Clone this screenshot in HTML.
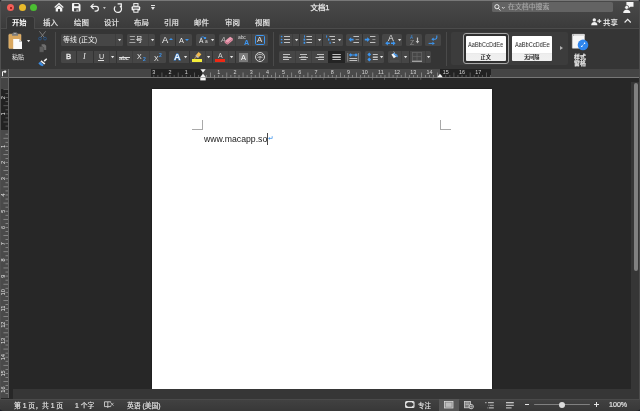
<!DOCTYPE html>
<html lang="zh-CN">
<head>
<meta charset="utf-8">
<title>文档1</title>
<style>
*{box-sizing:border-box;margin:0;padding:0}
html,body{width:640px;height:411px;overflow:hidden;background:#1d1f2a}
body{font-family:"Liberation Sans","Noto Sans CJK SC",sans-serif;color:#e6e6e6;position:relative;-webkit-font-smoothing:antialiased}
.abs{position:absolute}
#win{position:absolute;left:0;top:0;width:640px;height:411px;background:#272727;border-radius:2.5px 2.5px 4px 4px;overflow:hidden}
#title{position:absolute;left:0;top:0;width:640px;height:28px;background:linear-gradient(#494949 0,#444 40%,#3b3b3b 100%);border-top:1px solid #787878}
.tl{position:absolute;top:2.7px;width:7.2px;height:7.2px;border-radius:50%}
.t{position:absolute;white-space:nowrap;line-height:1;will-change:transform}
.tab{position:absolute;will-change:transform;top:18px;font-size:7.4px;line-height:9px;color:#e6e6e6;white-space:nowrap;-webkit-text-stroke:0.2px #e6e6e6}
#ribbon{position:absolute;left:0;top:28px;width:640px;height:41px;background:#353535}
.g{position:absolute;background:#464646;border-radius:1.5px}
.r1{top:34.5px}
.r2{top:51.5px}
.dv{position:absolute;top:0;width:1px;height:11px;background:#333}
.vsep{position:absolute;width:1px;background:#4a4a4a}
.arr{position:absolute;width:0;height:0;border-left:1.7px solid transparent;border-right:1.7px solid transparent;border-top:2.1px solid #ececec}
svg{position:absolute;overflow:visible}
#rulerband{position:absolute;left:0;top:69px;width:640px;height:9px;background:#454545;border-bottom:1px solid #777}
#status{position:absolute;left:0;top:398.6px;width:640px;height:12.4px;background:linear-gradient(#414141,#383838);border-top:1px solid #4a4a4a;font-size:6.5px;color:#e4e4e4}
</style>
</head>
<body>
<div id="win">

<!-- title bar + tabs -->
<div id="title">
  <div class="tl" style="left:7.3px;background:#f25f58"></div>
  <div class="tl" style="left:18.8px;background:#e8ba2b"></div>
  <div class="tl" style="left:30.1px;background:#4bbf32"></div>
  <div class="abs" style="left:9.9px;top:5.7px;width:2px;height:2px;border-radius:50%;background:#8c0f0a"></div>
</div>
<div class="t" style="left:290px;width:60px;top:4.2px;text-align:center;font-size:7.4px;color:#ececec;-webkit-text-stroke:0.25px #ececec">文档1</div>

<div id="ribbon"></div>
<!-- quick access icons -->
<svg style="left:53.6px;top:2.2px" width="10" height="10" viewBox="0 0 10 10"><path d="M5 0.7 L0.3 5 L1.1 5.9 L5 2.4 L8.9 5.9 L9.7 5 Z" fill="#f4f4f4"/><path d="M1.7 6.2 L5 3.3 L8.3 6.2 V9.5 H6 V6.9 H4 V9.5 H1.7 Z" fill="#f4f4f4"/></svg>
<svg style="left:72.3px;top:3.3px" width="9" height="9" viewBox="0 0 9 9"><path d="M0.8 0.1 H6.8 L8.5 1.8 V7.6 Q8.5 8.4 7.7 8.4 H0.8 Q0 8.4 0 7.6 V0.9 Q0 0.1 0.8 0.1 Z" fill="#f4f4f4"/><rect x="2.2" y="0.9" width="4.4" height="2.3" fill="#444"/><rect x="2" y="5.2" width="4.6" height="3.2" fill="#444"/><rect x="4.6" y="6.4" width="1" height="2" fill="#f4f4f4"/></svg>
<svg style="left:90px;top:3px" width="10" height="9" viewBox="0 0 10 9"><path d="M3.6 0.8 L1 3.4 L3.6 6" fill="none" stroke="#f2f2f2" stroke-width="1.2"/><path d="M1.2 3.4 H6 A2.4 2.4 0 0 1 6 8.2 H4.6" fill="none" stroke="#f2f2f2" stroke-width="1.2"/></svg>
<svg style="left:102.9px;top:6.5px" width="2.8" height="2.3" viewBox="0 0 2.8 2.3"><path d="M0 0 H2.8 L1.4 2.3 Z" fill="#c4c4c4"/></svg>
<svg style="left:112.6px;top:2.8px" width="10" height="10" viewBox="0 0 10 10"><path d="M2.3 3.4 A3.6 3.6 0 1 0 6.9 2.9" fill="none" stroke="#f2f2f2" stroke-width="1.25"/><path d="M4.6 0.9 H8.3 V4.6" fill="none" stroke="#f2f2f2" stroke-width="1.25"/></svg>
<svg style="left:130.8px;top:2.6px" width="10" height="10" viewBox="0 0 10 10"><rect x="2.8" y="0.6" width="4.2" height="2.6" fill="none" stroke="#f2f2f2" stroke-width="1"/><rect x="0.6" y="3.2" width="8.6" height="4.4" rx="1" fill="#f2f2f2"/><rect x="2" y="4.4" width="5.8" height="1.4" fill="#444"/><rect x="2.8" y="6.2" width="4.2" height="3" fill="#444" stroke="#f2f2f2" stroke-width="1"/></svg>
<div class="abs" style="left:151.4px;top:5.1px;width:3.9px;height:1px;background:#e4e4e4"></div>
<svg style="left:151.4px;top:7px" width="3.9" height="3" viewBox="0 0 3.9 3"><path d="M0 0 H3.9 L1.95 3 Z" fill="#e4e4e4"/></svg>

<!-- search -->
<div class="abs" style="left:491.8px;top:2.4px;width:121.6px;height:9.8px;background:#636363;border-radius:1.6px"></div>
<svg style="left:494.2px;top:3.6px" width="11" height="7" viewBox="0 0 11 7"><circle cx="2.9" cy="2.7" r="2.1" fill="none" stroke="#ececec" stroke-width="1"/><path d="M4.4 4.3 L6.3 6.5" stroke="#ececec" stroke-width="1"/><path d="M8 3.1 L9.3 4.4 L10.6 3.1" fill="none" stroke="#ececec" stroke-width="0.9"/></svg>
<div class="t" style="left:507.6px;top:4.1px;font-size:6.9px;color:#a6a6a6;-webkit-text-stroke:0.15px #a6a6a6">在文档中搜索</div>
<!-- user icon -->
<svg style="left:622.6px;top:2px" width="11" height="11" viewBox="0 0 11 11"><path d="M3.4 0.1 H10.5 V4.8 H7.4 L5.6 6.3 L5.9 4.8 H3.4 Z" fill="#f4f4f4"/><circle cx="3.7" cy="5.4" r="2" fill="#f4f4f4" stroke="#444" stroke-width="0.7"/><path d="M0.2 10.9 C0.2 8.6 1.6 7.7 3.7 7.7 C5.8 7.7 7.4 8.6 7.4 10.9 Z" fill="#f4f4f4"/></svg>

<!-- tabs -->
<div class="abs" style="left:0;top:28px;width:640px;height:1px;background:#4b4b4b"></div><div class="abs" style="left:5.6px;top:15.8px;width:29.2px;height:13.2px;background:#353535;border:1px solid #4b4b4b;border-bottom:0;border-radius:3px 3px 0 0"></div>
<div class="tab" style="left:12.3px;font-weight:bold;color:#fff;font-size:7.25px;-webkit-text-stroke:0">开始</div>
<div class="tab" style="left:43px">插入</div>
<div class="tab" style="left:73.5px">绘图</div>
<div class="tab" style="left:103.8px">设计</div>
<div class="tab" style="left:134px">布局</div>
<div class="tab" style="left:164px">引用</div>
<div class="tab" style="left:194.3px">邮件</div>
<div class="tab" style="left:224.6px">审阅</div>
<div class="tab" style="left:254.8px">视图</div>
<!-- share -->
<svg style="left:590.5px;top:17.5px" width="11" height="8" viewBox="0 0 11 8"><circle cx="3.3" cy="1.9" r="1.7" fill="#f0f0f0"/><path d="M0.2 7.2 C0.2 4.8 1.6 4 3.3 4 C5 4 6.4 4.8 6.4 7.2 Z" fill="#f0f0f0"/><path d="M8.3 1.1 V5.1 M6.3 3.1 H10.3" stroke="#f0f0f0" stroke-width="1.1"/></svg>
<div class="tab" style="left:603px;font-weight:bold;color:#e2e2e2;font-size:7.4px;-webkit-text-stroke:0">共享</div>
<svg style="left:624.3px;top:18.4px" width="7.4" height="5.4" viewBox="0 0 7.4 5.4"><path d="M0.6 4.5 L3.7 1.3 L6.8 4.5" fill="none" stroke="#ececec" stroke-width="1.2"/></svg>

<!-- ribbon -->
<svg style="left:8px;top:32px" width="15" height="18" viewBox="0 0 15 18"><rect x="0.8" y="2.2" width="12.2" height="14.4" rx="0.8" fill="#d9a75e" stroke="#f0c98a" stroke-width="0.5"/><path d="M5 0.4 H9 V1.6 H10 V3.8 H4 V1.6 H5 Z" fill="#7c7c7c"/><rect x="6" y="0.9" width="2" height="1" fill="#b0b0b0"/><path d="M5.2 7 H11 L14 10 V17 H5.2 Z" fill="#fbfbfb"/><path d="M11 7 V10 H14 Z" fill="#c4c4c4"/></svg>
<svg style="left:26.9px;top:40.1px" width="3.2" height="2.4" viewBox="0 0 3.2 2.4"><path d="M0 0.1 H3.2 L1.6 2.3 Z" fill="#e4e4e4"/></svg>
<div class="t" style="left:12.2px;top:54.6px;font-size:5.9px;color:#ececec;">粘贴</div>
<svg style="left:38px;top:31px" width="9" height="9.5" viewBox="0 0 9 9.5"><path d="M1.4 0.3 L6.4 6.6 M7.6 0.3 L2.6 6.6" stroke="#8c8c8c" stroke-width="0.8" fill="none"/><circle cx="2" cy="7.6" r="1.4" fill="none" stroke="#2a5a94" stroke-width="0.8"/><circle cx="7" cy="7.6" r="1.4" fill="none" stroke="#2a5a94" stroke-width="0.8"/></svg>
<svg style="left:38.8px;top:43.8px" width="7.5" height="8.5" viewBox="0 0 7.5 8.5"><path d="M2.6 0.2 H5.6 L7.2 1.8 V6 H2.6 Z" fill="#6f6f6f"/><path d="M0.3 2.4 H3.4 L4.9 3.9 V8.3 H0.3 Z" fill="#5e5e5e" stroke="#353535" stroke-width="0.4"/></svg>
<svg style="left:38px;top:57.6px" width="9.5" height="8.5" viewBox="0 0 9.5 8.5"><path d="M5.6 2.6 L8.4 0.3 L9.2 1.2 L6.8 3.8 Z" fill="#f2f2f2"/><path d="M3.4 2.2 L7.4 5.4 L6.2 6.6 L2.4 3.4 Z" fill="#f2f2f2"/><path d="M2.2 3.8 L5.8 7 L4.4 8.3 C3 7.8 1.4 6.6 0.3 5.2 Z" fill="#3c8be0"/></svg>
<div class="vsep" style="left:55px;top:31.5px;height:34.5px"></div>
<div class="g" style="left:61.0px;top:34.4px;width:62.0px;height:11.2px"></div>
<div class="abs" style="left:115.1px;top:34.4px;width:1px;height:11.2px;background:#3e3e3e"></div>
<svg style="left:118.2px;top:38.8px" width="3.2" height="2.4" viewBox="0 0 3.2 2.4"><path d="M0 0.1 H3.2 L1.6 2.3 Z" fill="#e4e4e4"/></svg>
<div class="t" style="left:63.2px;top:36.6px;font-size:6.9px;color:#f2f2f2;">等线 (正文)</div>
<div class="g" style="left:127.3px;top:34.4px;width:28.2px;height:11.2px"></div>
<div class="abs" style="left:148.4px;top:34.4px;width:1px;height:11.2px;background:#3e3e3e"></div>
<svg style="left:150.7px;top:38.8px" width="3.2" height="2.4" viewBox="0 0 3.2 2.4"><path d="M0 0.1 H3.2 L1.6 2.3 Z" fill="#e4e4e4"/></svg>
<div class="t" style="left:129.1px;top:36.8px;font-size:6.8px;color:#f2f2f2;">三号</div>
<div class="g" style="left:159.7px;top:34.4px;width:32.3px;height:11.2px"></div>
<div class="abs" style="left:175.2px;top:34.4px;width:1px;height:11.2px;background:#333"></div>
<div class="t" style="left:162.0px;top:35.2px;font-size:9.4px;color:#ececec;">A</div>
<div class="abs" style="left:169.1px;top:38.2px;width:0;height:0;border-left:2.1px solid transparent;border-right:2.1px solid transparent;border-bottom:2.3px solid #3d96f0"></div>
<div class="t" style="left:179.0px;top:36.6px;font-size:7.3px;color:#ececec;">A</div>
<div class="abs" style="left:184.9px;top:38.9px;width:0;height:0;border-left:2.1px solid transparent;border-right:2.1px solid transparent;border-top:2.3px solid #3d96f0"></div>
<div class="g" style="left:195.8px;top:34.4px;width:19.6px;height:11.2px"></div>
<svg style="left:210.6px;top:39.0px" width="3.2" height="2.4" viewBox="0 0 3.2 2.4"><path d="M0 0.1 H3.2 L1.6 2.3 Z" fill="#e4e4e4"/></svg>
<div class="t" style="left:198.5px;top:38.3px;font-size:6.6px;color:#ececec;">A</div>
<div class="t" style="left:204.8px;top:40.1px;font-size:4.8px;color:#d8d8d8;">a</div>
<svg style="left:200.4px;top:35.8px" width="7" height="4" viewBox="0 0 7 4"><path d="M0.4 2.2 C1.4 0.6 3.2 0.4 4.6 1.6" fill="none" stroke="#3d96f0" stroke-width="0.8"/><rect x="3.9" y="0.9" width="2.2" height="2.2" rx="0.5" fill="#3d96f0"/></svg>
<div class="g" style="left:219.1px;top:34.4px;width:48.7px;height:11.2px"></div>
<div class="abs" style="left:235.0px;top:34.4px;width:1px;height:11.2px;background:#3e3e3e"></div>
<div class="abs" style="left:251.0px;top:34.4px;width:1px;height:11.2px;background:#3e3e3e"></div>
<div class="t" style="left:221.4px;top:35.6px;font-size:7.2px;color:#b4b4b4;font-style:italic">A</div>
<svg style="left:224px;top:36px" width="10" height="9.4" viewBox="0 0 10 9.4"><path d="M0.9 5.1 L6.1 0.7 L8.9 2.6 L3.7 7.1 Z" fill="#ee9db2"/><path d="M0.9 5.1 L3.7 7.1 L3.5 8.8 L0.6 6.8 Z" fill="#d97f97"/><path d="M8.9 2.6 L8.9 4.3 L3.5 8.8 L3.7 7.1 Z" fill="#e48aa1"/></svg>
<div class="t" style="left:238.0px;top:34.9px;font-size:5.0px;color:#d8d8d8;letter-spacing:-0.1px">abc</div>
<div class="t" style="left:243.7px;top:38.5px;font-size:7.2px;color:#3d96f0;font-weight:bold">A</div>
<div class="abs" style="left:254.9px;top:35.2px;width:10px;height:9.4px;border:1px solid #3d96f0;border-radius:1.6px"></div>
<div class="t" style="left:257.3px;top:36.4px;font-size:7.8px;color:#e0e0e0;">A</div>
<div class="g" style="left:61.0px;top:51.3px;width:104.7px;height:11.3px"></div>
<div class="abs" style="left:76.1px;top:51.3px;width:1px;height:11.3px;background:#333"></div>
<div class="abs" style="left:93.0px;top:51.3px;width:1px;height:11.3px;background:#333"></div>
<div class="abs" style="left:108.5px;top:51.3px;width:1px;height:11.3px;background:#3e3e3e"></div>
<div class="abs" style="left:115.9px;top:51.3px;width:1px;height:11.3px;background:#333"></div>
<div class="abs" style="left:132.3px;top:51.3px;width:1px;height:11.3px;background:#3e3e3e"></div>
<div class="abs" style="left:148.9px;top:51.3px;width:1px;height:11.3px;background:#3e3e3e"></div>
<svg style="left:111.1px;top:56.0px" width="3.2" height="2.4" viewBox="0 0 3.2 2.4"><path d="M0 0.1 H3.2 L1.6 2.3 Z" fill="#e4e4e4"/></svg>
<div class="t" style="left:65.9px;top:52.9px;font-size:7.8px;color:#e8e8e8;-webkit-text-stroke:0.35px #e8e8e8">B</div>
<div class="t" style="left:83.2px;top:53.3px;font-size:8.2px;color:#e8e8e8;font-style:italic;font-family:Liberation Serif,serif">I</div>
<div class="t" style="left:98.5px;top:52.9px;font-size:7.2px;color:#e8e8e8;">U</div>
<div class="abs" style="left:98.4px;top:59.7px;width:5.6px;height:0.8px;background:#e0e0e0"></div>
<div class="t" style="left:119.2px;top:54.8px;font-size:6.0px;color:#dcdcdc;font-weight:bold;letter-spacing:-0.2px">abc</div>
<div class="abs" style="left:118.6px;top:57.3px;width:11.6px;height:0.6px;background:#e0e0e0"></div>
<div class="t" style="left:137.2px;top:53.0px;font-size:7.0px;color:#e8e8e8;">X</div>
<div class="t" style="left:142.5px;top:56.6px;font-size:5.0px;color:#3d96f0;font-weight:bold">2</div>
<div class="t" style="left:154.0px;top:55.0px;font-size:7.0px;color:#e8e8e8;">X</div>
<div class="t" style="left:159.2px;top:53.0px;font-size:5.0px;color:#3d96f0;font-weight:bold">2</div>
<div class="g" style="left:169.2px;top:51.3px;width:99.0px;height:11.3px"></div>
<div class="abs" style="left:188.9px;top:51.3px;width:1px;height:11.3px;background:#333"></div>
<div class="abs" style="left:205.0px;top:51.3px;width:1px;height:11.3px;background:#3e3e3e"></div>
<div class="abs" style="left:211.8px;top:51.3px;width:1px;height:11.3px;background:#333"></div>
<div class="abs" style="left:227.8px;top:51.3px;width:1px;height:11.3px;background:#3e3e3e"></div>
<div class="abs" style="left:235.0px;top:51.3px;width:1px;height:11.3px;background:#333"></div>
<div class="abs" style="left:250.9px;top:51.3px;width:1px;height:11.3px;background:#3e3e3e"></div>
<svg style="left:184.0px;top:56.0px" width="3.2" height="2.4" viewBox="0 0 3.2 2.4"><path d="M0 0.1 H3.2 L1.6 2.3 Z" fill="#e4e4e4"/></svg>
<svg style="left:207.3px;top:56.0px" width="3.2" height="2.4" viewBox="0 0 3.2 2.4"><path d="M0 0.1 H3.2 L1.6 2.3 Z" fill="#e4e4e4"/></svg>
<svg style="left:229.9px;top:56.0px" width="3.2" height="2.4" viewBox="0 0 3.2 2.4"><path d="M0 0.1 H3.2 L1.6 2.3 Z" fill="#e4e4e4"/></svg>
<div class="t" style="left:173.6px;top:52.8px;font-size:9.0px;color:#f2f2f2;font-weight:bold;-webkit-text-stroke:0.9px #3d8fe8;paint-order:stroke fill">A</div>
<svg style="left:193px;top:52px" width="9" height="7.5" viewBox="0 0 9 7.5"><path d="M5.6 0 L8.4 2.2 L5.8 5.2 L3 3 Z" fill="#f2bc50"/><path d="M3 3 L5.8 5.2 L5 6 L2.4 3.9 Z" fill="#d4d4d4"/><path d="M2.6 4.2 L4 5.3 L1.4 7.2 L0.9 6.8 Z" fill="#a8844c"/></svg>
<div class="abs" style="left:192px;top:59.3px;width:10.3px;height:2.6px;background:#f5ee3a"></div>
<div class="t" style="left:217.7px;top:52.4px;font-size:7.0px;color:#d4d4d4;">A</div>
<div class="abs" style="left:214.9px;top:59.3px;width:10.3px;height:2.6px;background:#f02814"></div>
<div class="abs" style="left:239px;top:52.5px;width:9px;height:9px;background:#7b7b7b"></div>
<div class="t" style="left:240.9px;top:53.6px;font-size:7.4px;color:#fafafa;">A</div>
<div class="abs" style="left:254.9px;top:51.8px;width:10.3px;height:10.3px;border:0.7px solid #d4d4d4;border-radius:50%"></div>
<div class="t" style="left:257.0px;top:53.9px;font-size:6.0px;color:#d4d4d4;">字</div>
<div class="vsep" style="left:273px;top:31.5px;height:34.5px"></div>
<div class="g" style="left:278.8px;top:34.4px;width:64.2px;height:11.2px"></div>
<div class="abs" style="left:292.2px;top:34.4px;width:1px;height:11.2px;background:#3e3e3e"></div>
<div class="abs" style="left:298.8px;top:34.4px;width:1px;height:11.2px;background:#333"></div>
<div class="abs" style="left:314.8px;top:34.4px;width:1px;height:11.2px;background:#3e3e3e"></div>
<div class="abs" style="left:322.0px;top:34.4px;width:1px;height:11.2px;background:#333"></div>
<svg style="left:294.6px;top:38.9px" width="3.2" height="2.4" viewBox="0 0 3.2 2.4"><path d="M0 0.1 H3.2 L1.6 2.3 Z" fill="#e4e4e4"/></svg>
<svg style="left:317.6px;top:38.9px" width="3.2" height="2.4" viewBox="0 0 3.2 2.4"><path d="M0 0.1 H3.2 L1.6 2.3 Z" fill="#e4e4e4"/></svg>
<svg style="left:338.2px;top:38.9px" width="3.2" height="2.4" viewBox="0 0 3.2 2.4"><path d="M0 0.1 H3.2 L1.6 2.3 Z" fill="#e4e4e4"/></svg>
<div class="g" style="left:346.1px;top:34.4px;width:32.9px;height:11.2px"></div>
<div class="abs" style="left:361.9px;top:34.4px;width:1px;height:11.2px;background:#333"></div>
<div class="g" style="left:382.3px;top:34.4px;width:19.8px;height:11.2px"></div>
<svg style="left:397.6px;top:38.8px" width="3.2" height="2.4" viewBox="0 0 3.2 2.4"><path d="M0 0.1 H3.2 L1.6 2.3 Z" fill="#e4e4e4"/></svg>
<div class="t" style="left:387.5px;top:33.9px;font-size:8.6px;color:#e4e4e4;">A</div>
<div class="g" style="left:405.7px;top:34.4px;width:16.0px;height:11.2px"></div>
<div class="t" style="left:409.9px;top:34.6px;font-size:5.8px;color:#3d96f0;transform:scaleX(0.8);transform-origin:0 0">A</div>
<div class="t" style="left:409.9px;top:39.6px;font-size:6.8px;color:#8e8e8e;">Z</div>
<div class="g" style="left:425.4px;top:34.4px;width:15.8px;height:11.2px"></div>
<svg style="left:428.4px;top:35px" width="10" height="10" viewBox="0 0 10 10"><path d="M8.8 0.4 V2.6 Q8.8 4.2 7.2 4.2 H5" fill="none" stroke="#3d96f0" stroke-width="1.1"/><path d="M3.4 4.2 L5.6 2.4 V6 Z" fill="#3d96f0"/><path d="M0.6 8.4 H4.6" stroke="#3d96f0" stroke-width="1"/><path d="M6.8 8.4 L4.4 6.7 V10 Z" fill="#3d96f0"/></svg>
<div class="g" style="left:278.8px;top:51.3px;width:82.1px;height:11.3px"></div>
<div class="abs" style="left:294.8px;top:51.3px;width:1px;height:11.3px;background:#3e3e3e"></div>
<div class="abs" style="left:311.1px;top:51.3px;width:1px;height:11.3px;background:#3e3e3e"></div>
<div class="abs" style="left:328.1px;top:51.3px;width:16.6px;height:11.3px;background:#242424"></div>
<div class="g" style="left:364.8px;top:51.3px;width:19.4px;height:11.3px"></div>
<svg style="left:379.7px;top:56.0px" width="3.2" height="2.4" viewBox="0 0 3.2 2.4"><path d="M0 0.1 H3.2 L1.6 2.3 Z" fill="#e4e4e4"/></svg>
<div class="g" style="left:388.0px;top:51.3px;width:43.0px;height:11.3px"></div>
<div class="abs" style="left:401.1px;top:51.3px;width:1px;height:11.3px;background:#3e3e3e"></div>
<div class="abs" style="left:408.5px;top:51.3px;width:1px;height:11.3px;background:#333"></div>
<div class="abs" style="left:424.5px;top:51.3px;width:1px;height:11.3px;background:#3e3e3e"></div>
<svg style="left:403.7px;top:56.0px" width="3.2" height="2.4" viewBox="0 0 3.2 2.4"><path d="M0 0.1 H3.2 L1.6 2.3 Z" fill="#e4e4e4"/></svg>
<svg style="left:426.6px;top:56.0px" width="3.2" height="2.4" viewBox="0 0 3.2 2.4"><path d="M0 0.1 H3.2 L1.6 2.3 Z" fill="#e4e4e4"/></svg>
<svg style="left:390px;top:51px" width="10" height="11" viewBox="0 0 10 11"><path d="M3.6 0.4 L4.8 2.2" stroke="#b8b8b8" stroke-width="0.7"/><path d="M1.4 3.6 L4.2 1.7 L6.9 5.2 L3.8 7.2 Z" fill="#f4f4f4"/><path d="M3 2.5 L4.2 1.7 L6.9 5.2 L6 5.8 Z" fill="#3d96f0"/><path d="M5.4 2.6 C7.2 3 8 4.4 7.7 6.4 L6.6 5.6 C6.8 4.6 6.4 3.8 5.4 2.6 Z" fill="#3d96f0"/><rect x="0" y="9.6" width="9.2" height="0.8" fill="#565656"/></svg>
<svg style="left:412.2px;top:52.2px" width="10" height="10" viewBox="0 0 10 10"><rect x="0.4" y="0.4" width="9.2" height="8.4" fill="none" stroke="#636363" stroke-width="0.8"/><path d="M5 0.4 V8.8 M0.4 4.6 H9.6" stroke="#636363" stroke-width="0.8"/><rect x="0" y="8.8" width="10" height="1" fill="#b4b4b4"/></svg>
<svg style="left:0;top:0" width="640" height="70" viewBox="0 0 640 70"><rect x="284.0" y="36.0" width="6.0" height="1.0" fill="#c2c2c2"/><circle cx="281.6" cy="36.5" r="0.85" fill="#3d96f0"/><rect x="284.0" y="39.0" width="6.0" height="1.0" fill="#c2c2c2"/><circle cx="281.6" cy="39.5" r="0.85" fill="#3d96f0"/><rect x="284.0" y="42.0" width="6.0" height="1.0" fill="#c2c2c2"/><circle cx="281.6" cy="42.5" r="0.85" fill="#3d96f0"/><rect x="306.4" y="36.0" width="5.6" height="1.0" fill="#c2c2c2"/><rect x="306.4" y="39.0" width="5.6" height="1.0" fill="#c2c2c2"/><rect x="306.4" y="42.0" width="5.6" height="1.0" fill="#c2c2c2"/><rect x="304.0" y="35.4" width="0.9" height="2.2" fill="#3d96f0"/><rect x="303.6" y="38.6" width="1.6" height="2.0" fill="#3d96f0"/><rect x="303.6" y="41.8" width="1.6" height="2.0" fill="#3d96f0"/><rect x="329.4" y="36.0" width="5.6" height="1.0" fill="#c2c2c2"/><rect x="331.4" y="39.0" width="3.6" height="1.0" fill="#c2c2c2"/><rect x="332.6" y="42.0" width="2.4" height="1.0" fill="#c2c2c2"/><rect x="326.2" y="35.4" width="0.9" height="2.2" fill="#3d96f0"/><rect x="328.0" y="38.6" width="1.4" height="2.0" fill="#3d96f0"/><rect x="329.6" y="41.8" width="1.0" height="2.0" fill="#3d96f0"/><rect x="353.4" y="36.0" width="5.6" height="1.0" fill="#c2c2c2"/><rect x="355.6" y="39.0" width="3.4" height="1.0" fill="#8c8c8c"/><rect x="353.4" y="42.0" width="5.6" height="1.0" fill="#c2c2c2"/><path d="M348.6 39.6 L351.2 37.2 V38.8 H353.6 V40.4 H351.2 V42 Z" fill="#3d96f0" /><rect x="370.0" y="36.0" width="5.4" height="1.0" fill="#c2c2c2"/><rect x="372.4" y="39.0" width="3.0" height="1.0" fill="#8c8c8c"/><rect x="370.0" y="42.0" width="5.4" height="1.0" fill="#c2c2c2"/><path d="M369.8 39.6 L367.2 37.2 V38.8 H364.8 V40.4 H367.2 V42 Z" fill="#3d96f0" /><path d="M385.2 43.3 L387.8 41 V42.5 H389.8 V44.1 H387.8 V45.6 Z M395.6 43.3 L393 41 V42.5 H391 V44.1 H393 V45.6 Z" fill="#3d96f0" /><path d="M416.9 37.4 H418.1 V41 H419.3 L417.5 43.4 L415.7 41 H416.9 Z" fill="#c4c4c4" /><rect x="283.0" y="54.0" width="7.0" height="1.0" fill="#c2c2c2"/><rect x="283.0" y="56.0" width="5.0" height="1.0" fill="#8c8c8c"/><rect x="283.0" y="57.0" width="8.4" height="1.0" fill="#c2c2c2"/><rect x="283.0" y="59.0" width="6.0" height="1.0" fill="#c2c2c2"/><rect x="300.0" y="54.0" width="7.0" height="1.0" fill="#c2c2c2"/><rect x="301.0" y="56.0" width="5.0" height="1.0" fill="#8c8c8c"/><rect x="299.0" y="57.0" width="9.0" height="1.0" fill="#c2c2c2"/><rect x="300.6" y="59.0" width="5.8" height="1.0" fill="#c2c2c2"/><rect x="317.0" y="54.0" width="7.0" height="1.0" fill="#c2c2c2"/><rect x="319.0" y="56.0" width="5.0" height="1.0" fill="#8c8c8c"/><rect x="315.6" y="57.0" width="8.4" height="1.0" fill="#c2c2c2"/><rect x="318.0" y="59.0" width="6.0" height="1.0" fill="#c2c2c2"/><rect x="332.4" y="54.0" width="8.4" height="1.0" fill="#c2c2c2"/><rect x="332.4" y="56.0" width="8.4" height="1.0" fill="#8c8c8c"/><rect x="332.4" y="57.0" width="8.4" height="1.0" fill="#c2c2c2"/><rect x="332.4" y="59.0" width="8.4" height="1.0" fill="#c2c2c2"/><rect x="347.3" y="53.0" width="0.9" height="8.6" fill="#8c8c8c"/><rect x="357.9" y="53.0" width="0.9" height="8.6" fill="#8c8c8c"/><path d="M348.8 55 L350.6 53.2 L352 54.6 H354.6 L356 53.2 L357.8 55 L356 56.8 L354.6 55.4 H352 L350.6 56.8 Z" fill="#3d96f0" /><rect x="349.4" y="58.0" width="7.8" height="1.0" fill="#c2c2c2"/><rect x="349.4" y="60.0" width="7.8" height="1.0" fill="#c2c2c2"/><rect x="372.8" y="54.0" width="5.0" height="1.0" fill="#c2c2c2"/><rect x="372.8" y="56.0" width="5.0" height="1.0" fill="#8c8c8c"/><rect x="372.8" y="57.0" width="5.0" height="1.0" fill="#c2c2c2"/><rect x="372.8" y="59.0" width="5.0" height="1.0" fill="#c2c2c2"/><path d="M369.3 52.6 L371.2 54.6 L369.3 56.6 L367.4 54.6 Z M369.3 57.4 L371.2 59.4 L369.3 61.4 L367.4 59.4 Z" fill="#3d96f0" /></svg>
<div class="vsep" style="left:446px;top:31.5px;height:34.5px"></div>
<div class="abs" style="left:451px;top:31.8px;width:116.5px;height:33.2px;background:#3c3c3c;border-radius:2px"></div>
<div class="abs" style="left:463.2px;top:33px;width:45.4px;height:30.6px;border:1.9px solid #a6a6a6;border-radius:3px;background:#303030"></div>
<div class="abs" style="left:466.2px;top:35.5px;width:39.4px;height:25.6px;background:linear-gradient(#fff 0,#fff 67%,#e6e6e6 68%,#eee 72%,#f0f0f0 100%);border-radius:1px"></div>
<div class="t" style="left:468.0px;top:40.7px;font-size:7.2px;color:#262626;transform:scaleX(0.795);transform-origin:0 0">AaBbCcDdEe</div>
<div class="t" style="left:466.2px;top:54.8px;font-size:5.2px;color:#1e1e1e;width:39.4px;text-align:center;font-weight:bold">正文</div>
<div class="abs" style="left:512.3px;top:35.9px;width:39.4px;height:25.4px;background:linear-gradient(#fff 0,#fff 67%,#e6e6e6 68%,#eee 72%,#f0f0f0 100%);border-radius:1px"></div>
<div class="t" style="left:514.6px;top:40.7px;font-size:7.2px;color:#262626;transform:scaleX(0.785);transform-origin:0 0">AaBbCcDdEe</div>
<div class="t" style="left:512.3px;top:54.8px;font-size:5.2px;color:#1e1e1e;width:39.4px;text-align:center;font-weight:bold">无间隔</div>
<div class="abs" style="left:560.1px;top:45.8px;width:0;height:0;border-top:2.7px solid transparent;border-bottom:2.7px solid transparent;border-left:3.8px solid #b0b0b0"></div>
<svg style="left:572.4px;top:34px" width="17" height="17" viewBox="0 0 17 17"><rect x="0.3" y="0.3" width="12.2" height="14" rx="0.5" fill="#f6f6f6" stroke="#d2d2d2" stroke-width="0.5"/><rect x="0.3" y="0.3" width="12.2" height="1.6" fill="#dadada"/><rect x="0.8" y="0.6" width="1.2" height="1" fill="#9a9a9a"/><circle cx="11" cy="10.9" r="5.3" fill="#2f86ee"/><path d="M9.4 12.6 L10.6 11.4 M11.6 10.2 L12.8 9" stroke="#fff" stroke-width="0.9"/><circle cx="12.6" cy="9.2" r="0.7" fill="#fff"/><circle cx="9.8" cy="12.4" r="0.7" fill="#fff"/></svg>
<div class="t" style="left:568.8px;top:54.3px;font-size:5.9px;color:#eeeeee;width:22px;text-align:center;line-height:6.1px;-webkit-text-stroke:0.25px #eee">样式<br>窗格</div>

<!-- ruler band -->
<div id="rulerband"></div>
<div class="abs" style="left:8px;top:69px;width:1px;height:9px;background:#6a6a6a"></div>
<svg style="left:2px;top:69.8px" width="5" height="7" viewBox="0 0 5 7"><path d="M0.5 6.2 V1.7 H3" fill="none" stroke="#f0f0f0" stroke-width="1"/><path d="M3 0.1 L4.5 1.7 L3 3.3 L1.9 1.7 Z" fill="#f0f0f0"/></svg>
<div class="abs" style="left:202.5px;top:69px;width:237.7px;height:8px;background:#4a4a4a"></div>
<div class="abs" style="left:202.5px;top:77px;width:237.7px;height:1px;background:#787878"></div>
<div class="abs" style="left:151.2px;top:69px;width:51.3px;height:8px;background:#222"></div>
<div class="abs" style="left:440.2px;top:69px;width:51.1px;height:8px;background:#222"></div>
<svg style="left:0;top:69px;will-change:transform" width="640" height="12" viewBox="0 0 640 12"><rect x="153.49" y="6" width="0.7" height="2.4" fill="#6e6e6e"/><rect x="157.55" y="6" width="0.7" height="2.4" fill="#6e6e6e"/><rect x="161.60" y="3.5" width="0.7" height="4.9" fill="#6e6e6e"/><rect x="165.66" y="6" width="0.7" height="2.4" fill="#6e6e6e"/><rect x="169.71" y="6" width="0.7" height="2.4" fill="#6e6e6e"/><rect x="173.77" y="6" width="0.7" height="2.4" fill="#6e6e6e"/><rect x="177.82" y="3.5" width="0.7" height="4.9" fill="#6e6e6e"/><rect x="181.88" y="6" width="0.7" height="2.4" fill="#6e6e6e"/><rect x="185.93" y="6" width="0.7" height="2.4" fill="#6e6e6e"/><rect x="189.99" y="6" width="0.7" height="2.4" fill="#6e6e6e"/><rect x="194.04" y="3.5" width="0.7" height="4.9" fill="#6e6e6e"/><rect x="198.09" y="6" width="0.7" height="2.4" fill="#6e6e6e"/><rect x="206.21" y="6" width="0.7" height="2.4" fill="#9c9c9c"/><rect x="210.26" y="3.5" width="0.7" height="4.9" fill="#9c9c9c"/><rect x="214.31" y="6" width="0.7" height="2.4" fill="#9c9c9c"/><rect x="218.37" y="6" width="0.7" height="2.4" fill="#9c9c9c"/><rect x="222.43" y="6" width="0.7" height="2.4" fill="#9c9c9c"/><rect x="226.48" y="3.5" width="0.7" height="4.9" fill="#9c9c9c"/><rect x="230.53" y="6" width="0.7" height="2.4" fill="#9c9c9c"/><rect x="234.59" y="6" width="0.7" height="2.4" fill="#9c9c9c"/><rect x="238.65" y="6" width="0.7" height="2.4" fill="#9c9c9c"/><rect x="242.70" y="3.5" width="0.7" height="4.9" fill="#9c9c9c"/><rect x="246.75" y="6" width="0.7" height="2.4" fill="#9c9c9c"/><rect x="250.81" y="6" width="0.7" height="2.4" fill="#9c9c9c"/><rect x="254.87" y="6" width="0.7" height="2.4" fill="#9c9c9c"/><rect x="258.92" y="3.5" width="0.7" height="4.9" fill="#9c9c9c"/><rect x="262.97" y="6" width="0.7" height="2.4" fill="#9c9c9c"/><rect x="267.03" y="6" width="0.7" height="2.4" fill="#9c9c9c"/><rect x="271.08" y="6" width="0.7" height="2.4" fill="#9c9c9c"/><rect x="275.14" y="3.5" width="0.7" height="4.9" fill="#9c9c9c"/><rect x="279.19" y="6" width="0.7" height="2.4" fill="#9c9c9c"/><rect x="283.25" y="6" width="0.7" height="2.4" fill="#9c9c9c"/><rect x="287.30" y="6" width="0.7" height="2.4" fill="#9c9c9c"/><rect x="291.36" y="3.5" width="0.7" height="4.9" fill="#9c9c9c"/><rect x="295.41" y="6" width="0.7" height="2.4" fill="#9c9c9c"/><rect x="299.47" y="6" width="0.7" height="2.4" fill="#9c9c9c"/><rect x="303.52" y="6" width="0.7" height="2.4" fill="#9c9c9c"/><rect x="307.58" y="3.5" width="0.7" height="4.9" fill="#9c9c9c"/><rect x="311.63" y="6" width="0.7" height="2.4" fill="#9c9c9c"/><rect x="315.69" y="6" width="0.7" height="2.4" fill="#9c9c9c"/><rect x="319.75" y="6" width="0.7" height="2.4" fill="#9c9c9c"/><rect x="323.80" y="3.5" width="0.7" height="4.9" fill="#9c9c9c"/><rect x="327.85" y="6" width="0.7" height="2.4" fill="#9c9c9c"/><rect x="331.91" y="6" width="0.7" height="2.4" fill="#9c9c9c"/><rect x="335.96" y="6" width="0.7" height="2.4" fill="#9c9c9c"/><rect x="340.02" y="3.5" width="0.7" height="4.9" fill="#9c9c9c"/><rect x="344.07" y="6" width="0.7" height="2.4" fill="#9c9c9c"/><rect x="348.13" y="6" width="0.7" height="2.4" fill="#9c9c9c"/><rect x="352.18" y="6" width="0.7" height="2.4" fill="#9c9c9c"/><rect x="356.24" y="3.5" width="0.7" height="4.9" fill="#9c9c9c"/><rect x="360.29" y="6" width="0.7" height="2.4" fill="#9c9c9c"/><rect x="364.35" y="6" width="0.7" height="2.4" fill="#9c9c9c"/><rect x="368.40" y="6" width="0.7" height="2.4" fill="#9c9c9c"/><rect x="372.46" y="3.5" width="0.7" height="4.9" fill="#9c9c9c"/><rect x="376.51" y="6" width="0.7" height="2.4" fill="#9c9c9c"/><rect x="380.57" y="6" width="0.7" height="2.4" fill="#9c9c9c"/><rect x="384.62" y="6" width="0.7" height="2.4" fill="#9c9c9c"/><rect x="388.68" y="3.5" width="0.7" height="4.9" fill="#9c9c9c"/><rect x="392.73" y="6" width="0.7" height="2.4" fill="#9c9c9c"/><rect x="396.79" y="6" width="0.7" height="2.4" fill="#9c9c9c"/><rect x="400.84" y="6" width="0.7" height="2.4" fill="#9c9c9c"/><rect x="404.90" y="3.5" width="0.7" height="4.9" fill="#9c9c9c"/><rect x="408.95" y="6" width="0.7" height="2.4" fill="#9c9c9c"/><rect x="413.01" y="6" width="0.7" height="2.4" fill="#9c9c9c"/><rect x="417.06" y="6" width="0.7" height="2.4" fill="#9c9c9c"/><rect x="421.12" y="3.5" width="0.7" height="4.9" fill="#9c9c9c"/><rect x="425.17" y="6" width="0.7" height="2.4" fill="#9c9c9c"/><rect x="429.23" y="6" width="0.7" height="2.4" fill="#9c9c9c"/><rect x="433.28" y="6" width="0.7" height="2.4" fill="#9c9c9c"/><rect x="437.34" y="3.5" width="0.7" height="4.9" fill="#9c9c9c"/><rect x="441.39" y="6" width="0.7" height="2.4" fill="#6e6e6e"/><rect x="445.45" y="6" width="0.7" height="2.4" fill="#6e6e6e"/><rect x="449.50" y="6" width="0.7" height="2.4" fill="#6e6e6e"/><rect x="453.56" y="3.5" width="0.7" height="4.9" fill="#6e6e6e"/><rect x="457.61" y="6" width="0.7" height="2.4" fill="#6e6e6e"/><rect x="461.67" y="6" width="0.7" height="2.4" fill="#6e6e6e"/><rect x="465.72" y="6" width="0.7" height="2.4" fill="#6e6e6e"/><rect x="469.78" y="3.5" width="0.7" height="4.9" fill="#6e6e6e"/><rect x="473.83" y="6" width="0.7" height="2.4" fill="#6e6e6e"/><rect x="477.89" y="6" width="0.7" height="2.4" fill="#6e6e6e"/><rect x="481.94" y="6" width="0.7" height="2.4" fill="#6e6e6e"/><rect x="486.00" y="3.5" width="0.7" height="4.9" fill="#6e6e6e"/><rect x="490.05" y="6" width="0.7" height="2.4" fill="#6e6e6e"/><rect x="214.28" y="9" width="0.7" height="1.8" fill="#6a6a6a"/><rect x="226.41" y="9" width="0.7" height="1.8" fill="#6a6a6a"/><rect x="238.54" y="9" width="0.7" height="1.8" fill="#6a6a6a"/><rect x="250.67" y="9" width="0.7" height="1.8" fill="#6a6a6a"/><rect x="262.80" y="9" width="0.7" height="1.8" fill="#6a6a6a"/><rect x="274.93" y="9" width="0.7" height="1.8" fill="#6a6a6a"/><rect x="287.06" y="9" width="0.7" height="1.8" fill="#6a6a6a"/><rect x="299.19" y="9" width="0.7" height="1.8" fill="#6a6a6a"/><rect x="311.32" y="9" width="0.7" height="1.8" fill="#6a6a6a"/><rect x="323.45" y="9" width="0.7" height="1.8" fill="#6a6a6a"/><rect x="335.58" y="9" width="0.7" height="1.8" fill="#6a6a6a"/><rect x="347.71" y="9" width="0.7" height="1.8" fill="#6a6a6a"/><rect x="359.84" y="9" width="0.7" height="1.8" fill="#6a6a6a"/><rect x="371.97" y="9" width="0.7" height="1.8" fill="#6a6a6a"/><rect x="384.10" y="9" width="0.7" height="1.8" fill="#6a6a6a"/><rect x="396.23" y="9" width="0.7" height="1.8" fill="#6a6a6a"/><rect x="408.36" y="9" width="0.7" height="1.8" fill="#6a6a6a"/><rect x="420.49" y="9" width="0.7" height="1.8" fill="#6a6a6a"/><rect x="432.62" y="9" width="0.7" height="1.8" fill="#6a6a6a"/><text x="153.84" y="5.2" font-size="5.4" fill="#d6d6d6" text-anchor="middle" font-family="Liberation Sans, sans-serif">3</text><text x="170.06" y="5.2" font-size="5.4" fill="#d6d6d6" text-anchor="middle" font-family="Liberation Sans, sans-serif">2</text><text x="186.28" y="5.2" font-size="5.4" fill="#d6d6d6" text-anchor="middle" font-family="Liberation Sans, sans-serif">1</text><text x="218.72" y="5.2" font-size="5.4" fill="#d6d6d6" text-anchor="middle" font-family="Liberation Sans, sans-serif">1</text><text x="234.94" y="5.2" font-size="5.4" fill="#d6d6d6" text-anchor="middle" font-family="Liberation Sans, sans-serif">2</text><text x="251.16" y="5.2" font-size="5.4" fill="#d6d6d6" text-anchor="middle" font-family="Liberation Sans, sans-serif">3</text><text x="267.38" y="5.2" font-size="5.4" fill="#d6d6d6" text-anchor="middle" font-family="Liberation Sans, sans-serif">4</text><text x="283.60" y="5.2" font-size="5.4" fill="#d6d6d6" text-anchor="middle" font-family="Liberation Sans, sans-serif">5</text><text x="299.82" y="5.2" font-size="5.4" fill="#d6d6d6" text-anchor="middle" font-family="Liberation Sans, sans-serif">6</text><text x="316.04" y="5.2" font-size="5.4" fill="#d6d6d6" text-anchor="middle" font-family="Liberation Sans, sans-serif">7</text><text x="332.26" y="5.2" font-size="5.4" fill="#d6d6d6" text-anchor="middle" font-family="Liberation Sans, sans-serif">8</text><text x="348.48" y="5.2" font-size="5.4" fill="#d6d6d6" text-anchor="middle" font-family="Liberation Sans, sans-serif">9</text><text x="364.70" y="5.2" font-size="5.4" fill="#d6d6d6" text-anchor="middle" font-family="Liberation Sans, sans-serif">10</text><text x="380.92" y="5.2" font-size="5.4" fill="#d6d6d6" text-anchor="middle" font-family="Liberation Sans, sans-serif">11</text><text x="397.14" y="5.2" font-size="5.4" fill="#d6d6d6" text-anchor="middle" font-family="Liberation Sans, sans-serif">12</text><text x="413.36" y="5.2" font-size="5.4" fill="#d6d6d6" text-anchor="middle" font-family="Liberation Sans, sans-serif">13</text><text x="429.58" y="5.2" font-size="5.4" fill="#d6d6d6" text-anchor="middle" font-family="Liberation Sans, sans-serif">14</text><text x="445.80" y="5.2" font-size="5.4" fill="#d6d6d6" text-anchor="middle" font-family="Liberation Sans, sans-serif">15</text><text x="462.02" y="5.2" font-size="5.4" fill="#d6d6d6" text-anchor="middle" font-family="Liberation Sans, sans-serif">16</text><text x="478.24" y="5.2" font-size="5.4" fill="#d6d6d6" text-anchor="middle" font-family="Liberation Sans, sans-serif">17</text></svg>
<svg style="left:199.5px;top:69px" width="6" height="12" viewBox="0 0 6 12"><path d="M0.3 0.3 H5.7 L3 3.6 Z" fill="#f4f4f4"/><path d="M3 4.8 L5.7 8 H0.3 Z" fill="#f4f4f4"/><rect x="0.3" y="8.6" width="5.4" height="2.8" fill="#f4f4f4"/></svg>
<svg style="left:437.2px;top:73px" width="6" height="5" viewBox="0 0 6 5"><path d="M3 0.8 L5.7 4.2 H0.3 Z" fill="#f4f4f4"/></svg>

<!-- document -->
<div class="abs" style="left:1px;top:78px;width:8px;height:320px;background:#454545;border-right:1px solid #646464"></div>
<div class="abs" style="left:1px;top:89px;width:7px;height:41.1px;background:#222"></div>
<div class="abs" style="left:1px;top:130.1px;width:7px;height:267.9px;background:#4a4a4a"></div>
<svg style="left:0;top:78px;will-change:transform" width="9" height="320" viewBox="0 78 9 320"><rect y="89.20" x="3.4" height="0.7" width="4.6" fill="#6e6e6e"/><rect y="93.25" x="5.5" height="0.7" width="2.5" fill="#6e6e6e"/><rect y="97.31" x="5.5" height="0.7" width="2.5" fill="#6e6e6e"/><rect y="101.37" x="5.5" height="0.7" width="2.5" fill="#6e6e6e"/><rect y="105.42" x="3.4" height="0.7" width="4.6" fill="#6e6e6e"/><rect y="109.47" x="5.5" height="0.7" width="2.5" fill="#6e6e6e"/><rect y="113.53" x="5.5" height="0.7" width="2.5" fill="#6e6e6e"/><rect y="117.59" x="5.5" height="0.7" width="2.5" fill="#6e6e6e"/><rect y="121.64" x="3.4" height="0.7" width="4.6" fill="#6e6e6e"/><rect y="125.69" x="5.5" height="0.7" width="2.5" fill="#6e6e6e"/><rect y="133.81" x="5.5" height="0.7" width="2.5" fill="#9c9c9c"/><rect y="137.86" x="3.4" height="0.7" width="4.6" fill="#9c9c9c"/><rect y="141.91" x="5.5" height="0.7" width="2.5" fill="#9c9c9c"/><rect y="145.97" x="5.5" height="0.7" width="2.5" fill="#9c9c9c"/><rect y="150.03" x="5.5" height="0.7" width="2.5" fill="#9c9c9c"/><rect y="154.08" x="3.4" height="0.7" width="4.6" fill="#9c9c9c"/><rect y="158.13" x="5.5" height="0.7" width="2.5" fill="#9c9c9c"/><rect y="162.19" x="5.5" height="0.7" width="2.5" fill="#9c9c9c"/><rect y="166.25" x="5.5" height="0.7" width="2.5" fill="#9c9c9c"/><rect y="170.30" x="3.4" height="0.7" width="4.6" fill="#9c9c9c"/><rect y="174.35" x="5.5" height="0.7" width="2.5" fill="#9c9c9c"/><rect y="178.41" x="5.5" height="0.7" width="2.5" fill="#9c9c9c"/><rect y="182.47" x="5.5" height="0.7" width="2.5" fill="#9c9c9c"/><rect y="186.52" x="3.4" height="0.7" width="4.6" fill="#9c9c9c"/><rect y="190.57" x="5.5" height="0.7" width="2.5" fill="#9c9c9c"/><rect y="194.63" x="5.5" height="0.7" width="2.5" fill="#9c9c9c"/><rect y="198.69" x="5.5" height="0.7" width="2.5" fill="#9c9c9c"/><rect y="202.74" x="3.4" height="0.7" width="4.6" fill="#9c9c9c"/><rect y="206.79" x="5.5" height="0.7" width="2.5" fill="#9c9c9c"/><rect y="210.85" x="5.5" height="0.7" width="2.5" fill="#9c9c9c"/><rect y="214.91" x="5.5" height="0.7" width="2.5" fill="#9c9c9c"/><rect y="218.96" x="3.4" height="0.7" width="4.6" fill="#9c9c9c"/><rect y="223.01" x="5.5" height="0.7" width="2.5" fill="#9c9c9c"/><rect y="227.07" x="5.5" height="0.7" width="2.5" fill="#9c9c9c"/><rect y="231.12" x="5.5" height="0.7" width="2.5" fill="#9c9c9c"/><rect y="235.18" x="3.4" height="0.7" width="4.6" fill="#9c9c9c"/><rect y="239.23" x="5.5" height="0.7" width="2.5" fill="#9c9c9c"/><rect y="243.29" x="5.5" height="0.7" width="2.5" fill="#9c9c9c"/><rect y="247.34" x="5.5" height="0.7" width="2.5" fill="#9c9c9c"/><rect y="251.40" x="3.4" height="0.7" width="4.6" fill="#9c9c9c"/><rect y="255.45" x="5.5" height="0.7" width="2.5" fill="#9c9c9c"/><rect y="259.51" x="5.5" height="0.7" width="2.5" fill="#9c9c9c"/><rect y="263.56" x="5.5" height="0.7" width="2.5" fill="#9c9c9c"/><rect y="267.62" x="3.4" height="0.7" width="4.6" fill="#9c9c9c"/><rect y="271.67" x="5.5" height="0.7" width="2.5" fill="#9c9c9c"/><rect y="275.73" x="5.5" height="0.7" width="2.5" fill="#9c9c9c"/><rect y="279.78" x="5.5" height="0.7" width="2.5" fill="#9c9c9c"/><rect y="283.84" x="3.4" height="0.7" width="4.6" fill="#9c9c9c"/><rect y="287.89" x="5.5" height="0.7" width="2.5" fill="#9c9c9c"/><rect y="291.95" x="5.5" height="0.7" width="2.5" fill="#9c9c9c"/><rect y="296.00" x="5.5" height="0.7" width="2.5" fill="#9c9c9c"/><rect y="300.06" x="3.4" height="0.7" width="4.6" fill="#9c9c9c"/><rect y="304.11" x="5.5" height="0.7" width="2.5" fill="#9c9c9c"/><rect y="308.17" x="5.5" height="0.7" width="2.5" fill="#9c9c9c"/><rect y="312.22" x="5.5" height="0.7" width="2.5" fill="#9c9c9c"/><rect y="316.28" x="3.4" height="0.7" width="4.6" fill="#9c9c9c"/><rect y="320.33" x="5.5" height="0.7" width="2.5" fill="#9c9c9c"/><rect y="324.39" x="5.5" height="0.7" width="2.5" fill="#9c9c9c"/><rect y="328.44" x="5.5" height="0.7" width="2.5" fill="#9c9c9c"/><rect y="332.50" x="3.4" height="0.7" width="4.6" fill="#9c9c9c"/><rect y="336.55" x="5.5" height="0.7" width="2.5" fill="#9c9c9c"/><rect y="340.61" x="5.5" height="0.7" width="2.5" fill="#9c9c9c"/><rect y="344.66" x="5.5" height="0.7" width="2.5" fill="#9c9c9c"/><rect y="348.72" x="3.4" height="0.7" width="4.6" fill="#9c9c9c"/><rect y="352.77" x="5.5" height="0.7" width="2.5" fill="#9c9c9c"/><rect y="356.83" x="5.5" height="0.7" width="2.5" fill="#9c9c9c"/><rect y="360.88" x="5.5" height="0.7" width="2.5" fill="#9c9c9c"/><rect y="364.94" x="3.4" height="0.7" width="4.6" fill="#9c9c9c"/><rect y="368.99" x="5.5" height="0.7" width="2.5" fill="#9c9c9c"/><rect y="373.05" x="5.5" height="0.7" width="2.5" fill="#9c9c9c"/><rect y="377.10" x="5.5" height="0.7" width="2.5" fill="#9c9c9c"/><rect y="381.16" x="3.4" height="0.7" width="4.6" fill="#9c9c9c"/><rect y="385.21" x="5.5" height="0.7" width="2.5" fill="#9c9c9c"/><rect y="389.27" x="5.5" height="0.7" width="2.5" fill="#9c9c9c"/><rect y="393.32" x="5.5" height="0.7" width="2.5" fill="#9c9c9c"/><text transform="translate(5.2 97.66) rotate(-90)" font-size="5.6" fill="#e8e8e8" text-anchor="middle" font-family="Liberation Sans, sans-serif">2</text><text transform="translate(5.2 113.88) rotate(-90)" font-size="5.6" fill="#e8e8e8" text-anchor="middle" font-family="Liberation Sans, sans-serif">1</text><text transform="translate(5.2 146.32) rotate(-90)" font-size="5.6" fill="#e8e8e8" text-anchor="middle" font-family="Liberation Sans, sans-serif">1</text><text transform="translate(5.2 162.54) rotate(-90)" font-size="5.6" fill="#e8e8e8" text-anchor="middle" font-family="Liberation Sans, sans-serif">2</text><text transform="translate(5.2 178.76) rotate(-90)" font-size="5.6" fill="#e8e8e8" text-anchor="middle" font-family="Liberation Sans, sans-serif">3</text><text transform="translate(5.2 194.98) rotate(-90)" font-size="5.6" fill="#e8e8e8" text-anchor="middle" font-family="Liberation Sans, sans-serif">4</text><text transform="translate(5.2 211.20) rotate(-90)" font-size="5.6" fill="#e8e8e8" text-anchor="middle" font-family="Liberation Sans, sans-serif">5</text><text transform="translate(5.2 227.42) rotate(-90)" font-size="5.6" fill="#e8e8e8" text-anchor="middle" font-family="Liberation Sans, sans-serif">6</text><text transform="translate(5.2 243.64) rotate(-90)" font-size="5.6" fill="#e8e8e8" text-anchor="middle" font-family="Liberation Sans, sans-serif">7</text><text transform="translate(5.2 259.86) rotate(-90)" font-size="5.6" fill="#e8e8e8" text-anchor="middle" font-family="Liberation Sans, sans-serif">8</text><text transform="translate(5.2 276.08) rotate(-90)" font-size="5.6" fill="#e8e8e8" text-anchor="middle" font-family="Liberation Sans, sans-serif">9</text><text transform="translate(5.2 292.30) rotate(-90)" font-size="5.6" fill="#e8e8e8" text-anchor="middle" font-family="Liberation Sans, sans-serif">10</text><text transform="translate(5.2 308.52) rotate(-90)" font-size="5.6" fill="#e8e8e8" text-anchor="middle" font-family="Liberation Sans, sans-serif">11</text><text transform="translate(5.2 324.74) rotate(-90)" font-size="5.6" fill="#e8e8e8" text-anchor="middle" font-family="Liberation Sans, sans-serif">12</text><text transform="translate(5.2 340.96) rotate(-90)" font-size="5.6" fill="#e8e8e8" text-anchor="middle" font-family="Liberation Sans, sans-serif">13</text><text transform="translate(5.2 357.18) rotate(-90)" font-size="5.6" fill="#e8e8e8" text-anchor="middle" font-family="Liberation Sans, sans-serif">14</text><text transform="translate(5.2 373.40) rotate(-90)" font-size="5.6" fill="#e8e8e8" text-anchor="middle" font-family="Liberation Sans, sans-serif">15</text><text transform="translate(5.2 389.62) rotate(-90)" font-size="5.6" fill="#e8e8e8" text-anchor="middle" font-family="Liberation Sans, sans-serif">16</text></svg>
<div class="abs" style="left:152px;top:89px;width:340px;height:300px;background:#fff;box-shadow:0 0 1.5px #111"></div>
<div class="abs" style="left:192.2px;top:120.3px;width:10.5px;height:9.4px;border-right:1px solid #a9a9a9;border-bottom:1px solid #a9a9a9"></div>
<div class="abs" style="left:440.1px;top:120.3px;width:10.5px;height:9.4px;border-left:1px solid #a9a9a9;border-bottom:1px solid #a9a9a9"></div>
<div class="t" style="left:203.5px;top:135.2px;font-size:8.7px;color:#222">www.macapp.so</div>
<div class="abs" style="left:266.9px;top:133px;width:0.9px;height:11.8px;background:#4a4a4a"></div>
<svg style="left:267.6px;top:135.8px" width="5" height="4" viewBox="0 0 5 4"><path d="M4.2 0.2 V2.4 H1.2" fill="none" stroke="#4a9aee" stroke-width="0.8"/><path d="M0.1 2.4 L1.9 1 V3.8 Z" fill="#4a9aee"/></svg>
<div class="abs" style="left:631px;top:82px;width:8px;height:307px;background:#363636"></div>
<div class="abs" style="left:633.6px;top:83.4px;width:4.4px;height:188px;background:#808080;border-radius:2.2px"></div>
<div class="abs" style="left:12.5px;top:389px;width:626.5px;height:10px;background:#363636"></div>
<div class="abs" style="left:639px;top:2px;width:1px;height:409px;background:#4c4c4c"></div>
<div class="abs" style="left:0;top:2px;width:1px;height:409px;background:#505050"></div>

<!-- status bar -->
<div id="status"></div>

<div class="t" style="left:13.8px;top:402.5px;font-size:6.8px;color:#e8e8e8;-webkit-text-stroke:0.15px #e8e8e8">第 1 页，共 1 页</div>
<div class="t" style="left:75px;top:402.5px;font-size:6.8px;color:#e8e8e8;-webkit-text-stroke:0.15px #e8e8e8">1 个字</div>
<svg style="left:104px;top:400.8px" width="10" height="8" viewBox="0 0 10 8"><path d="M0.5 0.8 H3.8 V5.6 H0.5 Z" fill="none" stroke="#e2e2e2" stroke-width="0.8"/><path d="M3.8 0.8 H6.7 V1.6 M6.7 4.8 V5.6 H3.8 M3.8 5.6 V7" fill="none" stroke="#e2e2e2" stroke-width="0.8"/><path d="M6.9 1.9 L9.5 4.7 M9.5 1.9 L6.9 4.7" stroke="#e2e2e2" stroke-width="0.7"/></svg>
<div class="t" style="left:126.5px;top:402.5px;font-size:6.8px;color:#e8e8e8;-webkit-text-stroke:0.15px #e8e8e8">英语 (美国)</div>
<svg style="left:405px;top:400.7px" width="9.6" height="7" viewBox="0 0 9.6 7"><rect x="0.6" y="0.6" width="8.4" height="5.8" rx="1" fill="none" stroke="#e4e4e4" stroke-width="1.1"/><path d="M1 1 H3 L1 3 Z M8.6 1 H6.6 L8.6 3 Z M1 6 H3 L1 4 Z M8.6 6 H6.6 L8.6 4 Z" fill="#e4e4e4"/></svg>
<div class="t" style="left:418.4px;top:402.5px;font-size:6.4px;color:#e8e8e8;-webkit-text-stroke:0.15px #e8e8e8">专注</div>
<div class="abs" style="left:438.5px;top:399px;width:20px;height:12px;background:#565656"></div>
<svg style="left:444px;top:401px" width="9.4" height="7.4" viewBox="0 0 9.4 7.4"><rect x="0.4" y="0.4" width="8.6" height="6.6" fill="#8a8a8a" stroke="#d8d8d8" stroke-width="0.8"/><rect x="1.8" y="1.6" width="5.8" height="4.2" fill="#bdbdbd"/></svg>
<svg style="left:464px;top:400.8px" width="10" height="8" viewBox="0 0 10 8"><rect x="0.4" y="0.4" width="6" height="6.4" fill="#7a7a7a" stroke="#d0d0d0" stroke-width="0.8"/><path d="M1.6 2 H5.2 M1.6 3.6 H5.2" stroke="#d0d0d0" stroke-width="0.6"/><circle cx="7.2" cy="5.6" r="2.2" fill="#3a3a3a" stroke="#e0e0e0" stroke-width="0.8"/><path d="M5 5.6 H9.4 M7.2 3.4 V7.8" stroke="#e0e0e0" stroke-width="0.5"/></svg>
<svg style="left:485px;top:401.6px" width="9" height="7" viewBox="0 0 9 7"><g fill="#cfcfcf"><rect x="0.2" y="0.2" width="1.3" height="1"/><rect x="3" y="0.2" width="5.8" height="1"/></g><g fill="#a8a8a8"><rect x="3.4" y="2.8" width="1" height="1"/><rect x="5" y="2.8" width="3.8" height="1"/><rect x="2.4" y="5.4" width="1" height="1"/></g><rect x="4" y="5.4" width="4.8" height="1" fill="#cfcfcf"/></svg>
<svg style="left:506px;top:401.6px" width="8" height="7" viewBox="0 0 8 7"><g fill="#d4d4d4"><rect x="0" y="0.1" width="7.8" height="1.2"/><rect x="0" y="2.8" width="7.8" height="1"/><rect x="0" y="5.4" width="5.6" height="1"/></g></svg>
<div class="abs" style="left:524.8px;top:404px;width:4.4px;height:1.1px;background:#e6e6e6"></div>
<div class="abs" style="left:534px;top:403.6px;width:55.5px;height:1.9px;background:#808080;border-radius:1px"></div>
<div class="abs" style="left:558.6px;top:401.5px;width:6px;height:6px;border-radius:50%;background:#dcdcdc"></div>
<div class="abs" style="left:594.2px;top:404px;width:4.6px;height:1.1px;background:#e6e6e6"></div><div class="abs" style="left:596px;top:402.2px;width:1.1px;height:4.6px;background:#e6e6e6"></div>
<div class="t" style="left:608.8px;top:402.1px;font-size:7.1px;color:#e8e8e8;-webkit-text-stroke:0.15px #e8e8e8">100%</div>


</div>
</body>
</html>
